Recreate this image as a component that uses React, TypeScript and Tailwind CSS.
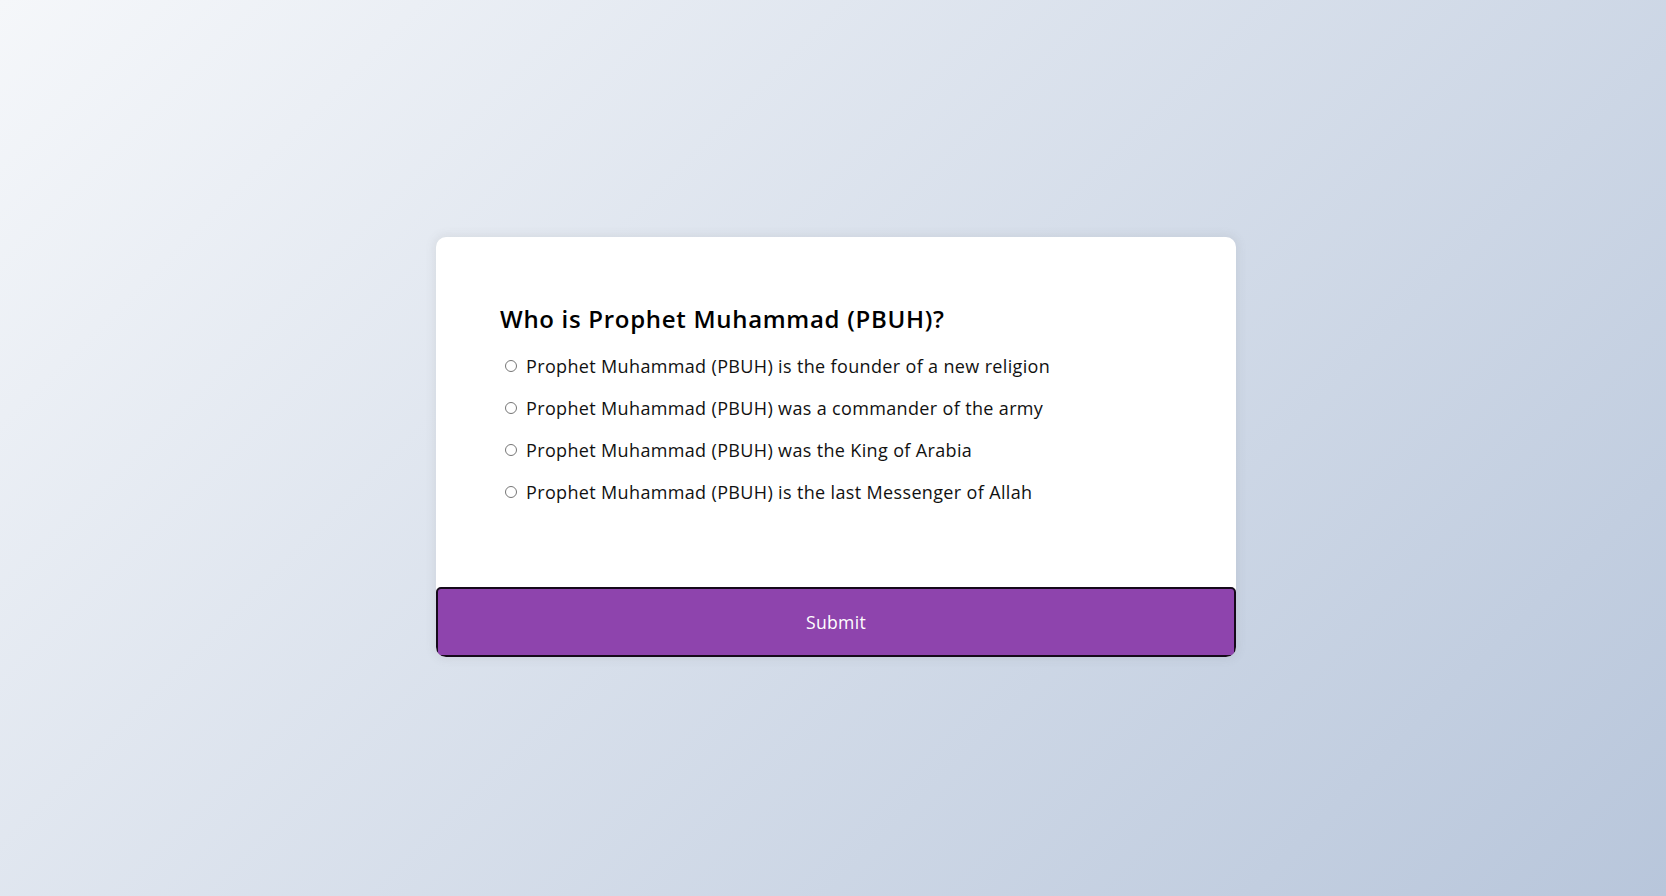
import { useState } from 'react'

const options = [
  'Prophet Muhammad (PBUH) is the founder of a new religion',
  'Prophet Muhammad (PBUH) was a commander of the army',
  'Prophet Muhammad (PBUH) was the King of Arabia',
  'Prophet Muhammad (PBUH) is the last Messenger of Allah',
]

export default function App() {
  const [answer, setAnswer] = useState<number | null>(null)

  return (
    <div className="flex h-screen items-center justify-center overflow-hidden bg-[linear-gradient(315deg,#b8c6db_0%,#f5f7fa_100%)] pb-[2px] pl-[6px] font-['Open_Sans',sans-serif]">
      <div className="w-[800px] overflow-hidden rounded-[10px] bg-white shadow-[0_0_10px_2px_rgba(100,100,100,0.1)]">
        <div className="p-16">
          <h2 className="text-2xl leading-9 font-semibold tracking-[0.7px] text-black">Who is Prophet Muhammad (PBUH)?</h2>
          <ul className="mt-3 mb-[18px]">
            {options.map((opt, i) => (
              <li key={i} className="my-4 flex items-center text-[18px] leading-[26px] tracking-[0.35px] text-[#111]">
                <input
                  type="radio"
                  id={`a${i}`}
                  name="answer"
                  checked={answer === i}
                  onChange={() => setAnswer(i)}
                  className="mr-[9px] ml-[5px] h-[12px] w-[12px]"
                />
                <label htmlFor={`a${i}`} className="cursor-pointer">
                  {opt}
                </label>
              </li>
            ))}
          </ul>
        </div>
        <button className="block w-full cursor-pointer rounded-[5px] border-2 border-[#150a1a] bg-[#8e44ad] py-5 text-[17.6px] leading-[26.4px] tracking-[0.3px] text-white">
          Submit
        </button>
      </div>
    </div>
  )
}
